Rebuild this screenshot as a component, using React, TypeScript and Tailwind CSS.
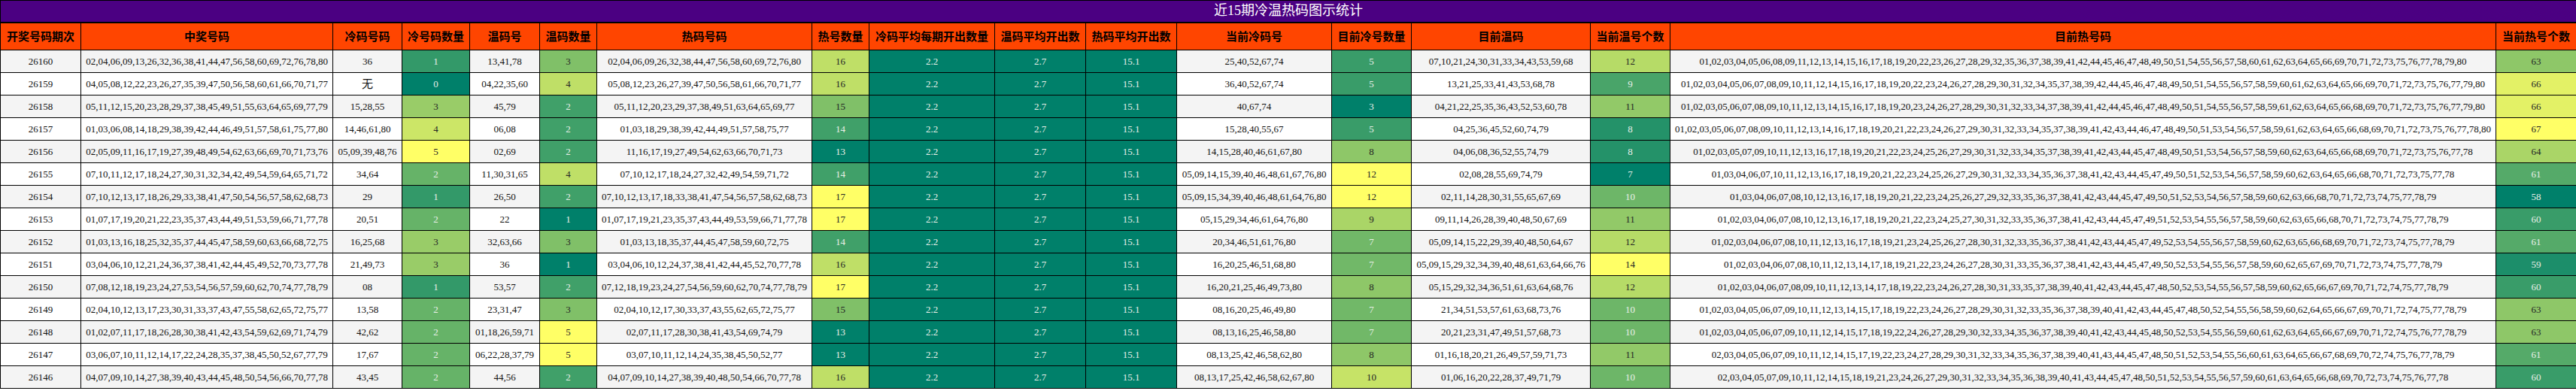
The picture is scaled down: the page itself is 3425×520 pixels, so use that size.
import React from 'react';

/**
 * 近15期冷温热码图示统计
 * Rows hold the draw, the cold/warm hits and the cold/warm pools after the draw.
 * Hot hits, the hot pool and every count are derived from those.
 */
const rows = [
  { id: '26160', win: '02,04,06,09,13,26,32,36,38,41,44,47,56,58,60,69,72,76,78,80', cold: '36', warm: '13,41,78', curCold: '25,40,52,67,74', curWarm: '07,10,21,24,30,31,33,34,43,53,59,68' },
  { id: '26159', win: '04,05,08,12,22,23,26,27,35,39,47,50,56,58,60,61,66,70,71,77', cold: '', warm: '04,22,35,60', curCold: '36,40,52,67,74', curWarm: '13,21,25,33,41,43,53,68,78' },
  { id: '26158', win: '05,11,12,15,20,23,28,29,37,38,45,49,51,55,63,64,65,69,77,79', cold: '15,28,55', warm: '45,79', curCold: '40,67,74', curWarm: '04,21,22,25,35,36,43,52,53,60,78' },
  { id: '26157', win: '01,03,06,08,14,18,29,38,39,42,44,46,49,51,57,58,61,75,77,80', cold: '14,46,61,80', warm: '06,08', curCold: '15,28,40,55,67', curWarm: '04,25,36,45,52,60,74,79' },
  { id: '26156', win: '02,05,09,11,16,17,19,27,39,48,49,54,62,63,66,69,70,71,73,76', cold: '05,09,39,48,76', warm: '02,69', curCold: '14,15,28,40,46,61,67,80', curWarm: '04,06,08,36,52,55,74,79' },
  { id: '26155', win: '07,10,11,12,17,18,24,27,30,31,32,34,42,49,54,59,64,65,71,72', cold: '34,64', warm: '11,30,31,65', curCold: '05,09,14,15,39,40,46,48,61,67,76,80', curWarm: '02,08,28,55,69,74,79' },
  { id: '26154', win: '07,10,12,13,17,18,26,29,33,38,41,47,50,54,56,57,58,62,68,73', cold: '29', warm: '26,50', curCold: '05,09,15,34,39,40,46,48,61,64,76,80', curWarm: '02,11,14,28,30,31,55,65,67,69' },
  { id: '26153', win: '01,07,17,19,20,21,22,23,35,37,43,44,49,51,53,59,66,71,77,78', cold: '20,51', warm: '22', curCold: '05,15,29,34,46,61,64,76,80', curWarm: '09,11,14,26,28,39,40,48,50,67,69' },
  { id: '26152', win: '01,03,13,16,18,25,32,35,37,44,45,47,58,59,60,63,66,68,72,75', cold: '16,25,68', warm: '32,63,66', curCold: '20,34,46,51,61,76,80', curWarm: '05,09,14,15,22,29,39,40,48,50,64,67' },
  { id: '26151', win: '03,04,06,10,12,21,24,36,37,38,41,42,44,45,49,52,70,73,77,78', cold: '21,49,73', warm: '36', curCold: '16,20,25,46,51,68,80', curWarm: '05,09,15,29,32,34,39,40,48,61,63,64,66,76' },
  { id: '26150', win: '07,08,12,18,19,23,24,27,53,54,56,57,59,60,62,70,74,77,78,79', cold: '08', warm: '53,57', curCold: '16,20,21,25,46,49,73,80', curWarm: '05,15,29,32,34,36,51,61,63,64,68,76' },
  { id: '26149', win: '02,04,10,12,13,17,23,30,31,33,37,43,47,55,58,62,65,72,75,77', cold: '13,58', warm: '23,31,47', curCold: '08,16,20,25,46,49,80', curWarm: '21,34,51,53,57,61,63,68,73,76' },
  { id: '26148', win: '01,02,07,11,17,18,26,28,30,38,41,42,43,54,59,62,69,71,74,79', cold: '42,62', warm: '01,18,26,59,71', curCold: '08,13,16,25,46,58,80', curWarm: '20,21,23,31,47,49,51,57,68,73' },
  { id: '26147', win: '03,06,07,10,11,12,14,17,22,24,28,35,37,38,45,50,52,67,77,79', cold: '17,67', warm: '06,22,28,37,79', curCold: '08,13,25,42,46,58,62,80', curWarm: '01,16,18,20,21,26,49,57,59,71,73' },
  { id: '26146', win: '04,07,09,10,14,27,38,39,40,43,44,45,48,50,54,56,66,70,77,78', cold: '43,45', warm: '44,56', curCold: '08,13,17,25,42,46,58,62,67,80', curWarm: '01,06,16,20,22,28,37,49,71,79' },
];

const list = (s: string) => (s ? s.split(',') : []);
const all = Array.from({ length: 80 }, (_, i) => String(i + 1).padStart(2, '0'));

const data = rows.map((r) => {
  const cold = list(r.cold);
  const warm = list(r.warm);
  const curCold = list(r.curCold);
  const curWarm = list(r.curWarm);
  const hot = list(r.win).filter((n) => !cold.includes(n) && !warm.includes(n));
  const curHot = all.filter((n) => !curCold.includes(n) && !curWarm.includes(n));
  return { ...r, cold, warm, hot, curCold, curWarm, curHot };
});

// Colour scale: dark teal (low) -> yellow (high), like a spreadsheet colour scale
const shade = (v: number, min: number, max: number) => {
  const t = max === min ? 0 : (v - min) / (max - min);
  const mix = (a: number, b: number) => Math.round(a + (b - a) * t);
  return {
    background: `rgb(${mix(0, 255)},${mix(128, 255)},${mix(106, 102)})`,
    color: t >= 0.5 ? '#262626' : '#e8efe8',
  };
};

const range = (vals: number[]) => [Math.min(...vals), Math.max(...vals)] as const;
const coldR = range(data.map((d) => d.cold.length));
const warmR = range(data.map((d) => d.warm.length));
const hotR = range(data.map((d) => d.hot.length));
const curColdR = range(data.map((d) => d.curCold.length));
const curWarmR = range(data.map((d) => d.curWarm.length));
const curHotR = range(data.map((d) => d.curHot.length));

const headers = [
  '开奖号码期次', '中奖号码', '冷码号码', '冷号码数量', '温码号', '温码数量', '热码号码', '热号数量',
  '冷码平均每期开出数量', '温码平均开出数', '热码平均开出数', '当前冷码号', '目前冷号数量', '目前温码',
  '当前温号个数', '目前热号码', '当前热号个数',
];

const widths = [
  'w-[107px]', 'w-[335px]', 'w-[92px]', 'w-[90px]', 'w-[93px]', 'w-[76px]', 'w-[286px]', 'w-[76px]',
  'w-[167px]', 'w-[121px]', 'w-[121px]', 'w-[206px]', 'w-[106px]', 'w-[238px]', 'w-[106px]', 'w-[1098px]', 'w-[107px]',
];

const Num = ({ v, r }: { v: number; r: readonly [number, number] }) => (
  <td className="border border-black" style={shade(v, r[0], r[1])}>
    {v}
  </td>
);

const Avg = ({ v }: { v: string }) => (
  <td className="border border-black bg-[#00806a] text-[#e8efe8]">{v}</td>
);

const Txt = ({ children }: { children: React.ReactNode }) => (
  <td className="border border-black whitespace-nowrap">{children}</td>
);

export default function App() {
  return (
    <div className="w-[3425px] bg-white">
      <table className="table-fixed border-collapse w-[3425px] text-center font-['Liberation_Serif','Noto_Sans_CJK_SC',serif] text-[13px] text-[#111]">
        <colgroup>
          {widths.map((w, i) => (
            <col key={i} className={w} />
          ))}
        </colgroup>
        <thead>
          <tr className="h-[29px]">
            <th
              colSpan={17}
              className="border border-black border-b-2 bg-[#4b0082] text-white text-[18px] font-normal"
            >
              近15期冷温热码图示统计
            </th>
          </tr>
          <tr className="h-[37px] bg-[#ff4500]">
            {headers.map((h) => (
              <th
                key={h}
                className="border border-black text-[15px] font-bold text-black whitespace-nowrap font-['Noto_Sans_CJK_SC',sans-serif]"
              >
                {h}
              </th>
            ))}
          </tr>
        </thead>
        <tbody>
          {data.map((d, i) => (
            <tr key={d.id} className={i % 2 === 0 ? 'h-[30px] bg-[#f4f4f4]' : 'h-[30px] bg-white'}>
              <Txt>{d.id}</Txt>
              <Txt>{d.win}</Txt>
              <Txt>
                {d.cold.length ? d.cold.join(',') : <span className="text-[15px] font-['Noto_Sans_CJK_SC',sans-serif]">无</span>}
              </Txt>
              <Num v={d.cold.length} r={coldR} />
              <Txt>{d.warm.join(',')}</Txt>
              <Num v={d.warm.length} r={warmR} />
              <Txt>{d.hot.join(',')}</Txt>
              <Num v={d.hot.length} r={hotR} />
              <Avg v="2.2" />
              <Avg v="2.7" />
              <Avg v="15.1" />
              <Txt>{d.curCold.join(',')}</Txt>
              <Num v={d.curCold.length} r={curColdR} />
              <Txt>{d.curWarm.join(',')}</Txt>
              <Num v={d.curWarm.length} r={curWarmR} />
              <Txt>{d.curHot.join(',')}</Txt>
              <Num v={d.curHot.length} r={curHotR} />
            </tr>
          ))}
        </tbody>
      </table>
    </div>
  );
}
